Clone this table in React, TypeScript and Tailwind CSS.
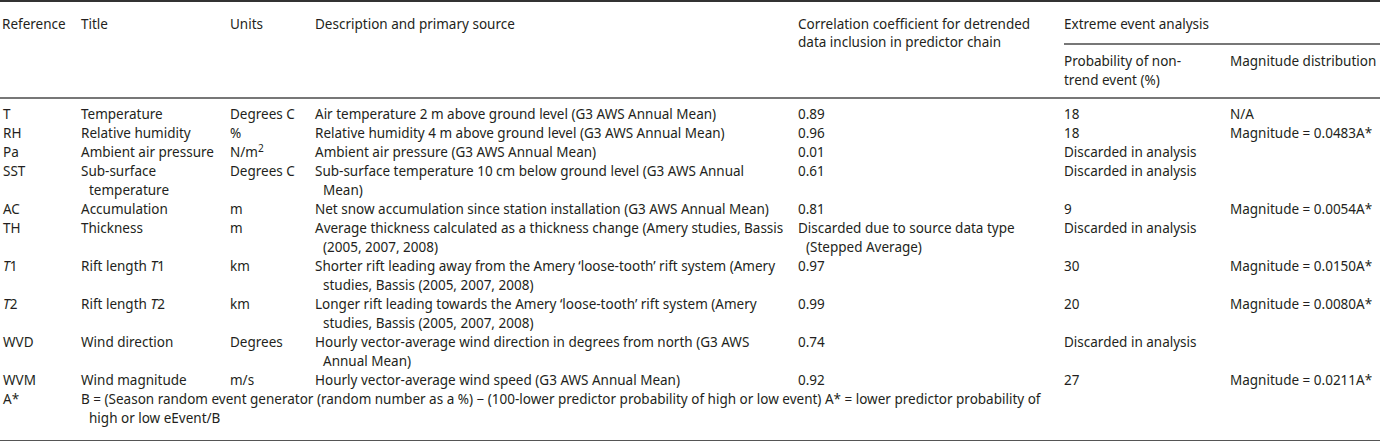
import React from "react";

type Row = {
  ref: React.ReactNode;
  title: React.ReactNode[];
  units: React.ReactNode;
  desc: React.ReactNode[];
  corr: React.ReactNode[];
  prob: React.ReactNode[];
  mag: React.ReactNode;
};

const I = ({ children }: { children: React.ReactNode }) => <i>{children}</i>;

const rows: Row[] = [
  { ref: "T", title: ["Temperature"], units: "Degrees C", desc: ["Air temperature 2 m above ground level (G3 AWS Annual Mean)"], corr: ["0.89"], prob: ["18"], mag: "N/A" },
  { ref: "RH", title: ["Relative humidity"], units: "%", desc: ["Relative humidity 4 m above ground level (G3 AWS Annual Mean)"], corr: ["0.96"], prob: ["18"], mag: "Magnitude = 0.0483A*" },
  { ref: "Pa", title: ["Ambient air pressure"], units: <>N/m<sup>2</sup></>, desc: ["Ambient air pressure (G3 AWS Annual Mean)"], corr: ["0.01"], prob: ["Discarded in analysis"], mag: "" },
  { ref: "SST", title: ["Sub-surface", "temperature"], units: "Degrees C", desc: ["Sub-surface temperature 10 cm below ground level (G3 AWS Annual", "Mean)"], corr: ["0.61"], prob: ["Discarded in analysis"], mag: "" },
  { ref: "AC", title: ["Accumulation"], units: "m", desc: ["Net snow accumulation since station installation (G3 AWS Annual Mean)"], corr: ["0.81"], prob: ["9"], mag: "Magnitude = 0.0054A*" },
  { ref: "TH", title: ["Thickness"], units: "m", desc: ["Average thickness calculated as a thickness change (Amery studies, Bassis", "(2005, 2007, 2008)"], corr: ["Discarded due to source data type", "(Stepped Average)"], prob: ["Discarded in analysis"], mag: "" },
  { ref: <><I>T</I>1</>, title: [<>Rift length <I>T</I>1</>], units: "km", desc: ["Shorter rift leading away from the Amery \u2018loose-tooth\u2019 rift system (Amery", "studies, Bassis (2005, 2007, 2008)"], corr: ["0.97"], prob: ["30"], mag: "Magnitude = 0.0150A*" },
  { ref: <><I>T</I>2</>, title: [<>Rift length <I>T</I>2</>], units: "km", desc: ["Longer rift leading towards the Amery \u2018loose-tooth\u2019 rift system (Amery", "studies, Bassis (2005, 2007, 2008)"], corr: ["0.99"], prob: ["20"], mag: "Magnitude = 0.0080A*" },
  { ref: "WVD", title: ["Wind direction"], units: "Degrees", desc: ["Hourly vector-average wind direction in degrees from north (G3 AWS", "Annual Mean)"], corr: ["0.74"], prob: ["Discarded in analysis"], mag: "" },
  { ref: "WVM", title: ["Wind magnitude"], units: "m/s", desc: ["Hourly vector-average wind speed (G3 AWS Annual Mean)"], corr: ["0.92"], prob: ["27"], mag: "Magnitude = 0.0211A*" },
];

function Lines({ lines }: { lines: React.ReactNode[] }) {
  return (
    <div className="pl-2 -indent-2">
      {lines.map((l, i) => (
        <React.Fragment key={i}>
          {i > 0 && <br />}
          {l}
        </React.Fragment>
      ))}
    </div>
  );
}

export default function App() {
  const td = "p-0 align-top whitespace-nowrap";
  return (
    <div
      className="w-[1380px] bg-white text-[#231f20] text-[13.5px] leading-[19px]"
      style={{ fontFamily: '"Noto Sans", "Open Sans", sans-serif' }}
    >
      <table className="w-[1380px] table-fixed border-collapse border-t-2 border-[#333]">
        <colgroup>
          <col className="w-[81px]" />
          <col className="w-[149px]" />
          <col className="w-[85px]" />
          <col className="w-[483px]" />
          <col className="w-[266px]" />
          <col className="w-[166px]" />
          <col className="w-[150px]" />
        </colgroup>
        <thead>
          <tr>
            <th rowSpan={2} className={`${td} pl-[2px] pt-[13px] text-left font-normal border-b-2 border-[#777]`}>Reference</th>
            <th rowSpan={2} className={`${td} pt-[13px] text-left font-normal border-b-2 border-[#777]`}>Title</th>
            <th rowSpan={2} className={`${td} pt-[13px] text-left font-normal border-b-2 border-[#777]`}>Units</th>
            <th rowSpan={2} className={`${td} pt-[13px] text-left font-normal border-b-2 border-[#777]`}>Description and primary source</th>
            <th rowSpan={2} className={`${td} pt-[13px] text-left font-normal leading-[18px] border-b-2 border-[#777]`}>
              Correlation coefficient for detrended
              <br />
              data inclusion in predictor chain
            </th>
            <th colSpan={2} className={`${td} pt-[13px] pb-[9px] text-left font-normal border-b-2 border-[#777]`}>Extreme event analysis</th>
          </tr>
          <tr>
            <th className={`${td} pt-[7px] pb-[7px] text-left font-normal border-b-2 border-[#777]`}>
              Probability of non-
              <br />
              trend event (%)
            </th>
            <th className={`${td} pt-[7px] pb-[7px] text-left font-normal border-b-2 border-[#777]`}>Magnitude distribution</th>
          </tr>
        </thead>
        <tbody>
          {rows.map((r, i) => {
            const pt = i === 0 ? "pt-[6px]" : "";
            return (
              <tr key={i}>
                <td className={`${td} ${pt} pl-[3px]`}>{r.ref}</td>
                <td className={`${td} ${pt}`}><Lines lines={r.title} /></td>
                <td className={`${td} ${pt}`}>{r.units}</td>
                <td className={`${td} ${pt}`}><Lines lines={r.desc} /></td>
                <td className={`${td} ${pt}`}><Lines lines={r.corr} /></td>
                <td className={`${td} ${pt}`}><Lines lines={r.prob} /></td>
                <td className={`${td} ${pt}`}>{r.mag}</td>
              </tr>
            );
          })}
          <tr className="border-b-2 border-[#555]">
            <td className={`${td} pl-[3px] pb-[12px]`}>A*</td>
            <td colSpan={4} className={`${td} pb-[12px]`}>
              <Lines
                lines={[
                  "B = (Season random event generator (random number as a %) \u2212 (100-lower predictor probability of high or low event) A* = lower predictor probability of",
                  "high or low eEvent/B",
                ]}
              />
            </td>
            <td className={`${td} pb-[12px]`}></td>
            <td className={`${td} pb-[12px]`}></td>
          </tr>
        </tbody>
      </table>
    </div>
  );
}
